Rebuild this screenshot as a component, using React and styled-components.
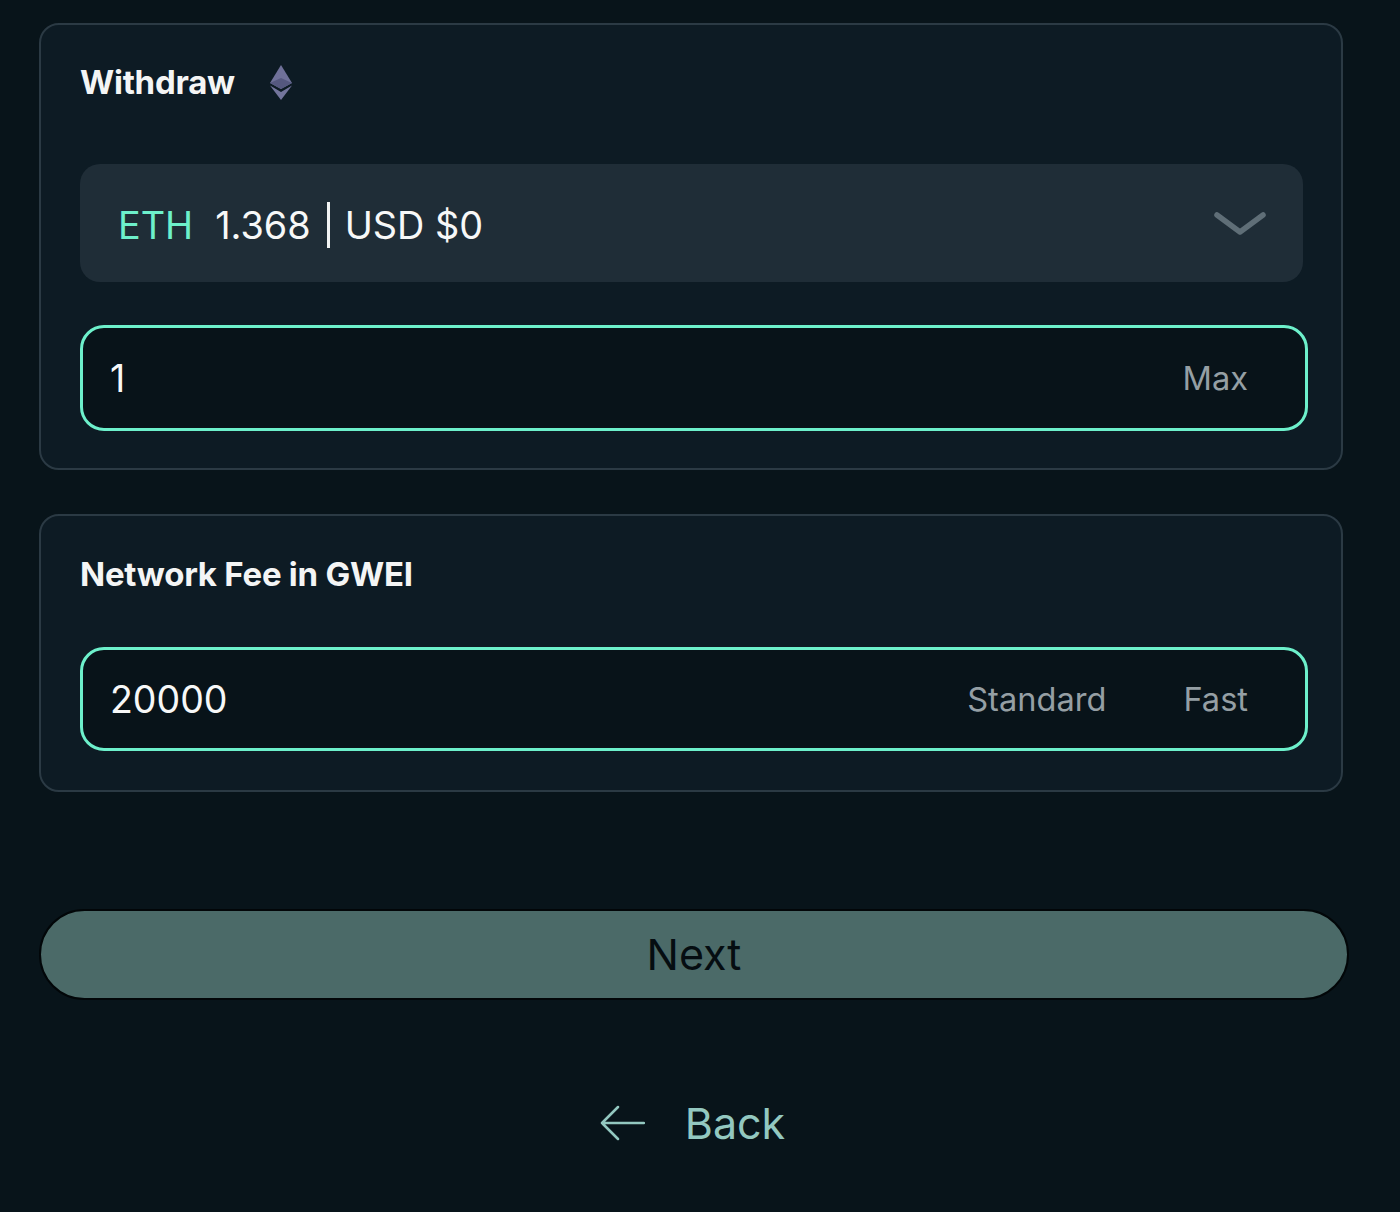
import styled, { createGlobalStyle } from 'styled-components';

const GlobalStyle = createGlobalStyle`
  html, body {
    margin: 0;
    padding: 0;
    background-color: #08141a;
  }
  * {
    box-sizing: border-box;
  }
`;

const Page = styled.div`
  width: 1400px;
  height: 1212px;
  overflow: hidden;
  padding: 23px 0 0 39px;
  font-family: Inter, "Noto Sans", sans-serif;
  background-color: #08141a;
`;

const Card = styled.section`
  width: 1304px;
  height: ${(p) => p.$height}px;
  margin-bottom: 44px;
  padding: ${(p) => p.$top}px 0 0 39px;
  background-color: #0d1b24;
  border: 2px solid #2b3a44;
  border-radius: 20px;
`;

const TitleRow = styled.div`
  display: flex;
  align-items: center;
  gap: 34px;
  height: 40px;
  margin-bottom: ${(p) => p.$gap}px;
`;

const Title = styled.h2`
  margin: 0;
  font-size: 33px;
  font-weight: 700;
  letter-spacing: -0.25px;
  color: #f4f5f5;
`;

const EthGlyph = styled.svg`
  margin-top: 2px;
`;

const Select = styled.div`
  display: flex;
  align-items: center;
  justify-content: space-between;
  width: 1223px;
  height: 118px;
  margin-bottom: 43px;
  padding: 4px 37px 0 38px;
  background-color: #1f2d37;
  border-radius: 20px;
  font-size: 37.8px;
  color: #f7f8f8;
`;

const Balance = styled.div`
  display: flex;
  align-items: center;
`;

const Coin = styled.span`
  margin-right: 22px;
  color: #6df0cb;
`;

const Divider = styled.span`
  width: 3px;
  height: 46px;
  margin: 0 15px 0 16px;
  background-color: #f1f3f3;
`;

const Field = styled.div`
  display: flex;
  align-items: center;
  justify-content: space-between;
  width: 1228px;
  height: ${(p) => p.$height}px;
  padding: 0 57px 0 27px;
  background-color: #081319;
  border: 3px solid #6df0cb;
  border-radius: 24px;
`;

const Value = styled.span`
  font-size: 37.5px;
  color: #f7f8f8;
`;

const Options = styled.div`
  display: flex;
  gap: 77px;
`;

const Option = styled.span`
  font-size: 32.6px;
  color: #959fa4;
`;

const NextButton = styled.button`
  display: block;
  width: 1310px;
  height: 91px;
  margin: 117px 0 0 0;
  padding: 0 0 2px;
  background-color: #4b6a68;
  border: 2px solid #020608;
  border-radius: 46px;
  font-family: inherit;
  font-size: 43px;
  color: #050d11;
`;

const BackLink = styled.a`
  display: flex;
  align-items: center;
  justify-content: center;
  gap: 40px;
  width: 1310px;
  margin-top: 97px;
  padding-right: 3px;
  font-size: 43px;
  color: #93c8c0;
`;

function EthIcon() {
  return (
    <EthGlyph width="24" height="36" viewBox="0 0 24 36">
      <path d="M12 0 L1 18 L12 24 L23 18 Z" fill="#6f7199" />
      <path d="M12 13 L1 18 L12 24 L23 18 Z" fill="#55587f" />
      <path d="M1 20.5 L12 35 L23 20.5 L12 27 Z" fill="#73759c" />
    </EthGlyph>
  );
}

function ChevronIcon() {
  return (
    <svg width="52" height="28" viewBox="0 0 52 28">
      <path d="M3 4 L26 21 L49 4" fill="none" stroke="#5f6e77" strokeWidth="5.5" strokeLinecap="round" strokeLinejoin="round" />
    </svg>
  );
}

function ArrowIcon() {
  return (
    <svg width="45" height="36" viewBox="0 0 45 36">
      <path d="M44 18 H2 M18 2 L2 18 L18 34" fill="none" stroke="#93c8c0" strokeWidth="2.5" strokeLinecap="round" strokeLinejoin="round" />
    </svg>
  );
}

export default function App() {
  return (
    <Page>
      <GlobalStyle />
      <Card $height={447} $top={37}>
        <TitleRow $gap={62}>
          <Title>Withdraw</Title>
          <EthIcon />
        </TitleRow>
        <Select>
          <Balance>
            <Coin>ETH</Coin>
            1.368
            <Divider />
            USD $0
          </Balance>
          <ChevronIcon />
        </Select>
        <Field $height={106}>
          <Value>1</Value>
          <Option>Max</Option>
        </Field>
      </Card>
      <Card $height={278} $top={38}>
        <TitleRow $gap={53}>
          <Title>Network Fee in GWEI</Title>
        </TitleRow>
        <Field $height={104}>
          <Value>20000</Value>
          <Options>
            <Option>Standard</Option>
            <Option>Fast</Option>
          </Options>
        </Field>
      </Card>
      <NextButton>Next</NextButton>
      <BackLink>
        <ArrowIcon />
        Back
      </BackLink>
    </Page>
  );
}
